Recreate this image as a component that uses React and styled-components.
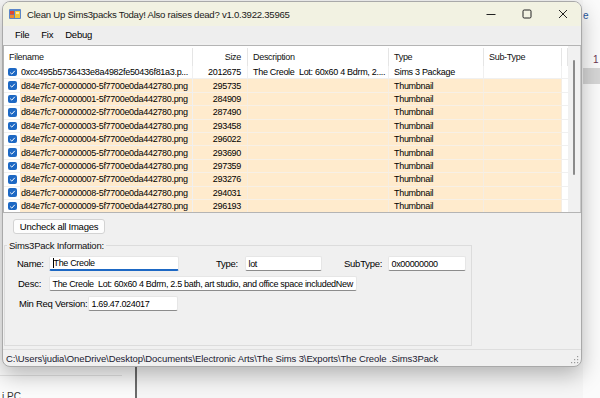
import styled, { createGlobalStyle } from "styled-components"

const Global = createGlobalStyle`
  html, body { margin: 0; padding: 0; overflow: hidden; }
  body { font-family: "Liberation Sans", Arial, sans-serif; }
`

// Bureau atras da janela
const Desktop = styled.div`
  position: relative;
  width: 600px;
  height: 398px;
  overflow: hidden;
  background: #f6f6f6;
`

// Pedaços do explorer que aparecem atrás
const BackStrip = styled.div`
  position: absolute;
  left: 583px;
  top: 0;
  width: 17px;
  height: 398px;
  background: #fbfbfb;
  font-size: 10px;
`
const BackLink = styled.span`
  display: block;
  margin-top: 10px;
  color: #2a5aa0;
`
const BackNumber = styled.span`
  display: block;
  margin: 33px 0 0 10px;
  color: #6a3050;
`
const BackBand = styled.div`
  margin-top: 3px;
  height: 16px;
  background: #d6d6d6;
`
const BackSide = styled.div`
  position: absolute;
  left: 0;
  top: 360px;
  width: 135px;
  height: 38px;
  background: #fbfbfb;
  border-right: 2px solid #6c6c6c;
  font-size: 10px;
  color: #333;
`
const BackLine = styled.div`
  margin-top: 15px;
  width: 122px;
  border-top: 1px solid #e2e2e2;
`
const BackLabel = styled.div`
  margin: 15px 0 0 2px;
`

// Janela principal
const Window = styled.div`
  position: absolute;
  left: 2px;
  top: 1px;
  width: 580px;
  height: 366px;
  box-sizing: border-box;
  border: 1px solid #a9a9a9;
  border-radius: 8px;
  overflow: hidden;
  background: #f0f0f0;
  display: flex;
  flex-direction: column;
  box-shadow: 0 8px 22px rgba(0, 0, 0, 0.28);
  font-size: 9.5px;
  letter-spacing: -0.25px;
  color: #000;
`
const TitleBar = styled.div`
  height: 24px;
  flex-shrink: 0;
  display: flex;
  align-items: center;
  background: #f2f2e2;
  padding-left: 6px;
`
const Title = styled.span`
  margin-left: 6px;
  flex: 1;
  font-size: 9.6px;
  color: #1a1a1a;
`
const CaptionButton = styled.div`
  width: 36px;
  height: 24px;
  display: flex;
  align-items: center;
  justify-content: center;
`
const MenuBar = styled.div`
  height: 17px;
  flex-shrink: 0;
  display: flex;
  align-items: center;
  padding-left: 6px;
  background: #eeeeee;
`
const MenuItem = styled.span`
  padding: 0 6px;
`

// Lista de arquivos
const List = styled.div`
  margin-top: 2px;
  height: 168px;
  flex-shrink: 0;
  box-sizing: border-box;
  border: 1px solid #b4b4b4;
  border-right: none;
  background: #fff;
  display: flex;
  overflow: hidden;
  font-size: 9px;
  letter-spacing: -0.3px;
`
const Table = styled.div`
  flex: 1;
  display: grid;
  grid-template-columns: 189px 55px 141px 95px 78px 1fr;
  grid-auto-rows: 13.4px;
  grid-template-rows: 20px;
  align-content: start;
`
const HeadCell = styled.div`
  display: flex;
  align-items: center;
  justify-content: ${p => (p.$right ? "flex-end" : "flex-start")};
  padding: 0 ${p => (p.$right ? "6px" : "0")} 0 ${p => (p.$right ? "0" : "5px")};
  border-right: 1px solid #e5e5e5;
  margin: 2px 0 0;
  color: #111;
`
const Cell = styled.div`
  display: flex;
  align-items: center;
  justify-content: ${p => (p.$right ? "flex-end" : "flex-start")};
  padding: 0 ${p => (p.$right ? "6px" : "0")} 0 ${p => (p.$right ? "0" : "5px")};
  background: ${p => (p.$thumb ? "#ffebcd" : "#fff")};
  border-right: 1px solid ${p => (p.$thumb ? "#f5ede2" : "#f0f0f0")};
  border-bottom: 1px solid ${p => (p.$thumb ? "#f7f0e6" : "#f0f0f0")};
  white-space: pre;
  overflow: hidden;
  box-sizing: border-box;
`
const NameCell = styled.div`
  display: flex;
  align-items: stretch;
  padding-left: 4px;
  border-right: 1px solid #f0f0f0;
  border-bottom: 1px solid #f0f0f0;
  box-sizing: border-box;
  overflow: hidden;
`
const Check = styled.span`
  align-self: center;
  width: 8.5px;
  height: 8.5px;
  border-radius: 2px;
  background: #1d68c4;
  display: flex;
  align-items: center;
  justify-content: center;
  flex-shrink: 0;
`
const NameText = styled.span`
  margin-left: 3px;
  flex: 1;
  display: flex;
  align-items: center;
  padding-left: 1.5px;
  background: ${p => (p.$thumb ? "#ffebcd" : "#fff")};
  white-space: nowrap;
  overflow: hidden;
`
const Filler = styled.div`
  background: #fff;
  border-bottom: 1px solid #f0f0f0;
`
const ScrollTrack = styled.div`
  width: 13px;
  flex-shrink: 0;
  background: #f1f1f1;
  border-right: 1px solid #c9c9c9;
  box-sizing: border-box;
  padding-top: 14px;
  display: flex;
  justify-content: center;
`
const ScrollThumb = styled.div`
  width: 2.5px;
  height: 115px;
  border-radius: 2px;
  background: #8a8a8a;
`

// Parte de baixo
const Button = styled.div`
  margin: 6px 0 0 10px;
  width: 92px;
  height: 15px;
  box-sizing: border-box;
  border: 1px solid #d3d3d3;
  border-radius: 3px;
  background: #fdfdfd;
  display: flex;
  align-items: center;
  justify-content: center;
  flex-shrink: 0;
`
const Group = styled.fieldset`
  margin: 6px 0 0 1px;
  padding: 0 0 34px;
  width: 468px;
  box-sizing: border-box;
  border: 1px solid #dcdcdc;
  min-width: 0;
`
const Legend = styled.legend`
  margin-left: 2px;
  padding: 0 2px;
  line-height: 11px;
  color: #111;
`
const FieldRow = styled.div`
  display: flex;
  align-items: center;
  height: 15px;
  margin-top: ${p => p.$top}px;
  padding-left: ${p => p.$pad}px;
`
const Label = styled.span`
  width: ${p => p.$w}px;
  margin-left: ${p => p.$ml || 0}px;
  flex-shrink: 0;
`
const TextBox = styled.div`
  width: ${p => p.$w}px;
  height: 15px;
  box-sizing: border-box;
  background: #fff;
  border: 1px solid #e6e6e6;
  border-bottom: ${p => (p.$focus ? "2px solid #1d68c4" : "1px solid #8c8c8c")};
  border-radius: 2px;
  padding-left: 2.5px;
  display: flex;
  align-items: center;
  font-size: 9px;
  letter-spacing: -0.33px;
  white-space: pre;
  overflow: hidden;
  flex-shrink: 0;
`
const Caret = styled.span`
  width: 1px;
  height: 10px;
  background: #000;
`
const StatusBar = styled.div`
  margin-top: auto;
  height: 16px;
  flex-shrink: 0;
  border-top: 1px solid #dedede;
  display: flex;
  align-items: center;
  padding-left: 3px;
  letter-spacing: -0.1px;
  color: #1a1a30;
  position: relative;
`
const Grip = styled.svg`
  position: absolute;
  right: 2px;
  bottom: 2px;
`

const thumbs = [
  ["d84e7fc7-00000000-5f7700e0da442780.png", "295735"],
  ["d84e7fc7-00000001-5f7700e0da442780.png", "284909"],
  ["d84e7fc7-00000002-5f7700e0da442780.png", "287490"],
  ["d84e7fc7-00000003-5f7700e0da442780.png", "293458"],
  ["d84e7fc7-00000004-5f7700e0da442780.png", "296022"],
  ["d84e7fc7-00000005-5f7700e0da442780.png", "293690"],
  ["d84e7fc7-00000006-5f7700e0da442780.png", "297359"],
  ["d84e7fc7-00000007-5f7700e0da442780.png", "293276"],
  ["d84e7fc7-00000008-5f7700e0da442780.png", "294031"],
  ["d84e7fc7-00000009-5f7700e0da442780.png", "296193"],
]

function CheckMark() {
  return (
    <Check>
      <svg width="7" height="7" viewBox="0 0 7 7">
        <polyline points="1.2,3.6 2.8,5.1 5.8,1.8" fill="none" stroke="#fff" strokeWidth="1" />
      </svg>
    </Check>
  )
}

function Row({ name, size, desc, type, thumb }) {
  return (
    <>
      <NameCell>
        <CheckMark />
        <NameText $thumb={thumb}>{name}</NameText>
      </NameCell>
      <Cell $thumb={thumb} $right>{size}</Cell>
      <Cell $thumb={thumb}>{desc}</Cell>
      <Cell $thumb={thumb}>{type}</Cell>
      <Cell $thumb={thumb}></Cell>
      <Filler />
    </>
  )
}

export default function App() {
  return (
    <Desktop>
      <Global />
      <BackStrip>
        <BackLink>e</BackLink>
        <BackNumber>1</BackNumber>
        <BackBand />
      </BackStrip>
      <BackSide>
        <BackLine />
        <BackLabel>i PC</BackLabel>
      </BackSide>

      <Window>
        <TitleBar>
          <svg width="12" height="10" viewBox="0 0 12 10">
            <rect x="0" y="0" width="12" height="10" rx="1" fill="#5b86c9" />
            <rect x="1" y="2" width="4" height="3.5" fill="#e2472f" />
            <rect x="1" y="6" width="4" height="3" fill="#f08a2c" />
            <rect x="6" y="2" width="5" height="7" fill="#f4c63a" />
            <rect x="7" y="3" width="3" height="2" fill="#fbe9a8" />
          </svg>
          <Title>Clean Up Sims3packs Today! Also raises dead? v1.0.3922.35965</Title>
          <CaptionButton>
            <svg width="10" height="10" viewBox="0 0 10 10">
              <line x1="0.5" y1="5.5" x2="9.5" y2="5.5" stroke="#222" strokeWidth="1" />
            </svg>
          </CaptionButton>
          <CaptionButton>
            <svg width="10" height="10" viewBox="0 0 10 10">
              <rect x="1" y="1" width="8" height="8" rx="1.2" fill="none" stroke="#222" strokeWidth="1" />
            </svg>
          </CaptionButton>
          <CaptionButton>
            <svg width="10" height="10" viewBox="0 0 10 10">
              <path d="M1 1 L9 9 M9 1 L1 9" stroke="#222" strokeWidth="1" />
            </svg>
          </CaptionButton>
        </TitleBar>

        <MenuBar>
          <MenuItem>File</MenuItem>
          <MenuItem>Fix</MenuItem>
          <MenuItem>Debug</MenuItem>
        </MenuBar>

        <List>
          <Table>
            <HeadCell>Filename</HeadCell>
            <HeadCell $right>Size</HeadCell>
            <HeadCell>Description</HeadCell>
            <HeadCell>Type</HeadCell>
            <HeadCell>Sub-Type</HeadCell>
            <HeadCell />
            <Row
              name="0xcc495b5736433e8a4982fe50436f81a3.p..."
              size="2012675"
              desc="The Creole  Lot: 60x60 4 Bdrm, 2...."
              type="Sims 3 Package"
            />
            {thumbs.map(([name, size]) => (
              <Row key={name} name={name} size={size} desc="" type="Thumbnail" thumb />
            ))}
          </Table>
          <ScrollTrack>
            <ScrollThumb />
          </ScrollTrack>
        </List>

        <Button>Uncheck all Images</Button>

        <Group>
          <Legend>Sims3Pack Information:</Legend>
          <FieldRow $top={5} $pad={12}>
            <Label $w={32}>Name:</Label>
            <TextBox $w={130} $focus>
              <Caret />
              The Creole
            </TextBox>
            <Label $w={29} $ml={37}>Type:</Label>
            <TextBox $w={77}>lot</TextBox>
            <Label $w={44} $ml={22}>SubType:</Label>
            <TextBox $w={78}>0x00000000</TextBox>
          </FieldRow>
          <FieldRow $top={5} $pad={13}>
            <Label $w={31}>Desc:</Label>
            <TextBox $w={308}>The Creole  Lot: 60x60 4 Bdrm, 2.5 bath, art studio, and office space includedNew</TextBox>
          </FieldRow>
          <FieldRow $top={5} $pad={14}>
            <Label $w={69}>Min Req Version:</Label>
            <TextBox $w={90}>1.69.47.024017</TextBox>
          </FieldRow>
        </Group>

        <StatusBar>
          C:\Users\judia\OneDrive\Desktop\Documents\Electronic Arts\The Sims 3\Exports\The Creole .Sims3Pack
          <Grip width="9" height="9" viewBox="0 0 9 9">
            <rect x="7" y="1" width="1.2" height="1.2" fill="#999" />
            <rect x="4" y="4" width="1.2" height="1.2" fill="#999" />
            <rect x="7" y="4" width="1.2" height="1.2" fill="#999" />
            <rect x="1" y="7" width="1.2" height="1.2" fill="#999" />
            <rect x="4" y="7" width="1.2" height="1.2" fill="#999" />
            <rect x="7" y="7" width="1.2" height="1.2" fill="#999" />
          </Grip>
        </StatusBar>
      </Window>
    </Desktop>
  )
}
